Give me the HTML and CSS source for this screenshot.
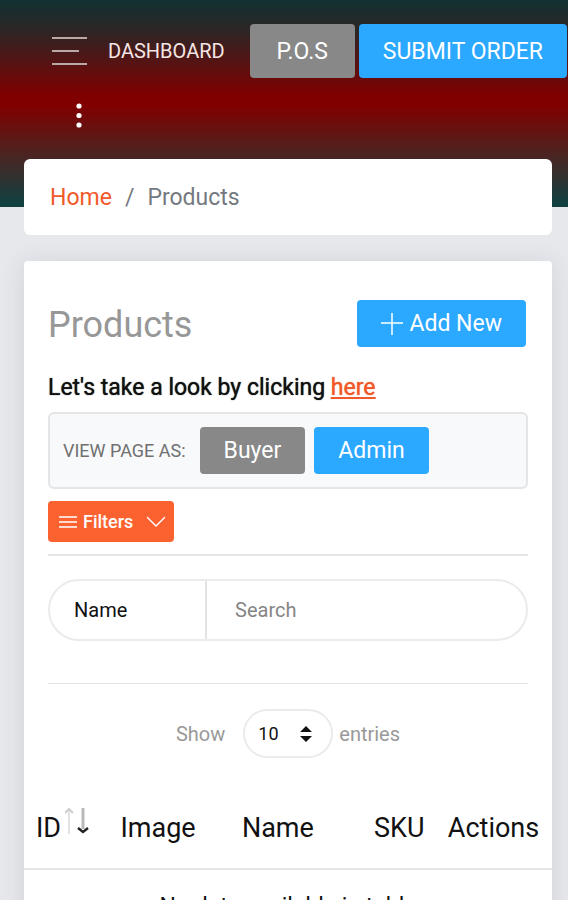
FILE: index.html
```html
<!DOCTYPE html>
<html lang="en">
<head>
    <meta charset="utf-8">
    <meta name="viewport" content="width=device-width, initial-scale=1">
    <title>Products</title>
    <link rel="stylesheet" href="styles.css">
</head>
<body>
    <header class="topbar">
        <nav class="topbar-nav">
            <button type="button" class="icon-btn menu-btn" aria-label="Menu">
                <svg width="36" height="32" viewBox="0 0 36 32" stroke="currentColor" stroke-width="2">
                    <path d="M0 3h35M0 16h27M0 29h35"/>
                </svg>
            </button>
            <a href="#" class="nav-link">DASHBOARD</a>
            <div class="nav-buttons">
                <button type="button" class="btn btn-lg btn-grey">P.O.S</button>
                <button type="button" class="btn btn-lg btn-blue">SUBMIT ORDER</button>
            </div>
            <button type="button" class="icon-btn more-btn" aria-label="More">
                <svg width="6" height="26" viewBox="0 0 6 26" fill="currentColor">
                    <circle cx="3" cy="4" r="2.6"/>
                    <circle cx="3" cy="13.5" r="2.6"/>
                    <circle cx="3" cy="23" r="2.6"/>
                </svg>
            </button>
        </nav>
    </header>

    <main class="content">
        <nav class="breadcrumb" aria-label="Breadcrumb">
            <a href="#">Home</a>
            <span class="separator">/</span>
            <span>Products</span>
        </nav>

        <section class="card">
            <div class="card-body">
                <div class="card-header">
                    <h1>Products</h1>
                    <button type="button" class="btn btn-blue btn-add">
                        <svg width="22" height="22" viewBox="0 0 22 22" fill="none" stroke="currentColor" stroke-width="1.5">
                            <path d="M11 0v22M0 10h22"/>
                        </svg>
                        Add New
                    </button>
                </div>

                <p class="intro">Let's take a look by clicking <a href="#">here</a></p>

                <div class="view-as">
                    <span class="view-label">VIEW PAGE AS:</span>
                    <button type="button" class="btn btn-grey">Buyer</button>
                    <button type="button" class="btn btn-blue">Admin</button>
                </div>

                <button type="button" class="btn btn-filters">
                    <svg width="18" height="14" viewBox="0 0 18 14" fill="none" stroke="currentColor" stroke-width="1.4">
                        <path d="M0 2h18M0 7h18M0 12h18"/>
                    </svg>
                    Filters
                    <svg class="chevron" width="18" height="12" viewBox="0 0 18 12" fill="none" stroke="currentColor" stroke-width="1.4">
                        <path d="M0 1l9 9 9-9"/>
                    </svg>
                </button>

                <div class="search-area">
                    <div class="search-group">
                        <select class="search-field" aria-label="Search by">
                            <option>Name</option>
                        </select>
                        <input type="text" class="search-input" placeholder="Search" aria-label="Search">
                    </div>
                </div>

                <div class="length">
                    <label for="entries">Show</label>
                    <div class="select-wrap">
                        <select id="entries">
                            <option>10</option>
                        </select>
                        <svg width="12" height="16" viewBox="0 0 12 16" fill="currentColor">
                            <path d="M6 0l6 6H0zM6 16l6-6H0z"/>
                        </svg>
                    </div>
                    <span>entries</span>
                </div>
            </div>

            <table class="products">
                <thead>
                    <tr>
                        <th class="col-id">
                            <div class="sortable">
                                ID
                                <svg width="25" height="28" viewBox="0 0 25 28" fill="none" stroke-width="2">
                                    <path stroke="#e2e2e2" d="M4 27V3"/>
                                    <path stroke="#cfcfcf" d="M0 6l4-4 4 4"/>
                                    <path stroke="#b9b9b9" stroke-width="3" d="M18 1v21"/>
                                    <path stroke="#222" stroke-width="2.5" d="M13 21l5 4 5-4"/>
                                </svg>
                            </div>
                        </th>
                        <th class="col-image">Image</th>
                        <th class="col-name">Name</th>
                        <th class="col-sku">SKU</th>
                        <th class="col-actions">Actions</th>
                    </tr>
                </thead>
                <tbody>
                    <tr>
                        <td colspan="5">No data available in table</td>
                    </tr>
                </tbody>
            </table>
        </section>
    </main>
</body>
</html>
```

FILE: styles.css
```css
:root {
    --orange: #fb6230;
    --link: #f1592a;
    --blue: #2ba8ff;
    --grey: #888;
    --line: #e4e5e6;
}

* {
    box-sizing: border-box;
}

body {
    margin: 0;
    background: #e6e8ec;
    color: #111;
    font-family: Roboto, sans-serif;
    font-size: 23px;
    line-height: 30px;
}

button, input, select {
    font-family: inherit;
    color: inherit;
}

svg {
    display: block;
    flex-shrink: 0;
}

a {
    color: var(--link);
    text-decoration: none;
}

.topbar {
    padding: 24px 0 79px 52px;
    background: linear-gradient(#113132, #302424 16%, #800000 46%, #800000 51%, #482623 76%, #124041 98%);
}

.topbar-nav {
    display: flex;
    flex-wrap: wrap;
    align-items: center;
    row-gap: 24px;
}

.icon-btn {
    padding: 0;
    border: none;
    background: none;
    color: #fff;
}

.menu-btn {
    margin-right: 20px;
    color: #b9a9a6;
}

.nav-link {
    margin-right: auto;
    color: #f4e6e4;
    font-size: 20px;
}

.nav-buttons {
    display: flex;
    gap: 4px;
    padding-right: 1px;
}

.more-btn {
    margin-left: 24px;
}

.btn {
    height: 47px;
    padding: 0 24px;
    border: none;
    border-radius: 4px;
    color: #fff;
    font-size: 23px;
    white-space: nowrap;
}

.btn-lg {
    height: 54px;
}

.btn-grey {
    min-width: 105px;
    background: var(--grey);
}

.btn-blue {
    background: var(--blue);
}

.content {
    margin-top: -48px;
    padding: 0 16px 24px 24px;
}

.breadcrumb {
    display: flex;
    gap: 13px;
    margin-bottom: 26px;
    padding: 24px 26px 22px;
    border-radius: 6px;
    background: #fff;
    color: #747980;
}

.card {
    border-radius: 4px;
    background: #fff;
    box-shadow: 0 2px 24px rgba(60, 60, 80, 0.12);
}

.card-body {
    padding: 39px 24px 0;
}

.card-header {
    display: flex;
    justify-content: space-between;
    align-items: flex-start;
    padding-right: 2px;
}

h1 {
    margin: 0;
    color: #979797;
    font-size: 36px;
    font-weight: 400;
    line-height: 50px;
}

.btn-add {
    display: flex;
    align-items: center;
    gap: 6px;
}

.intro {
    margin: 23px 0 9px;
    text-shadow: 0 0 1px currentColor;
}

.intro a {
    text-decoration: underline;
}

.view-as {
    display: flex;
    align-items: center;
    gap: 9px;
    margin-bottom: 12px;
    padding: 13px;
    border: 2px solid var(--line);
    border-radius: 6px;
    background: #f8f9fb;
}

.view-label {
    margin-right: 5px;
    color: #707070;
    font-size: 18px;
}

.btn-filters {
    display: flex;
    align-items: center;
    gap: 6px;
    height: 41px;
    padding: 0 9px 0 11px;
    background: var(--orange);
    font-size: 18px;
    font-weight: 500;
}

.chevron {
    margin-left: 8px;
}

.search-area {
    margin-top: 12px;
    padding: 23px 0 42px;
    border-top: 2px solid var(--line);
    border-bottom: 1px solid var(--line);
}

.search-group {
    display: flex;
    height: 62px;
    border: 2px solid #ebebeb;
    border-radius: 31px;
    overflow: hidden;
}

.search-field, .search-input {
    min-width: 0;
    border: none;
    background: none;
    font-size: 20px;
    outline: none;
}

.search-field {
    width: 33%;
    appearance: none;
    padding: 0 24px;
    border-right: 2px solid #e4e4e4;
}

.search-input {
    flex: 1;
    padding: 0 28px;
}

.search-input::placeholder {
    color: #858585;
}

.length {
    display: flex;
    justify-content: center;
    align-items: center;
    padding-top: 25px;
    color: #999;
    font-size: 20px;
}

.select-wrap {
    display: grid;
    align-items: center;
    width: 90px;
    height: 49px;
    margin: 0 6px 0 18px;
    border: 2px solid #ebebeb;
    border-radius: 25px;
    color: #111;
}

.select-wrap select, .select-wrap svg {
    grid-area: 1 / 1;
}

.select-wrap select {
    height: 100%;
    appearance: none;
    padding: 0 13px;
    border: none;
    background: none;
    font-size: 18px;
}

.select-wrap svg {
    justify-self: end;
    margin-right: 19px;
    pointer-events: none;
}

.products {
    width: 100%;
    margin-top: 28px;
    border-collapse: collapse;
    table-layout: fixed;
    white-space: nowrap;
}

.products th {
    padding: 27px 12px 25px;
    border-bottom: 2px solid var(--line);
    font-size: 27px;
    font-weight: 400;
    text-align: left;
}

.products td {
    padding: 22px 12px;
    text-align: center;
}

.col-id { width: 16%; }
.col-image { width: 23%; }
.col-name { width: 25%; }
.col-sku { width: 14%; }
.col-actions { width: 22%; }

.sortable {
    display: flex;
    align-items: flex-start;
    gap: 4px;
    height: 30px;
}

.sortable svg {
    margin-top: -6px;
}
```
